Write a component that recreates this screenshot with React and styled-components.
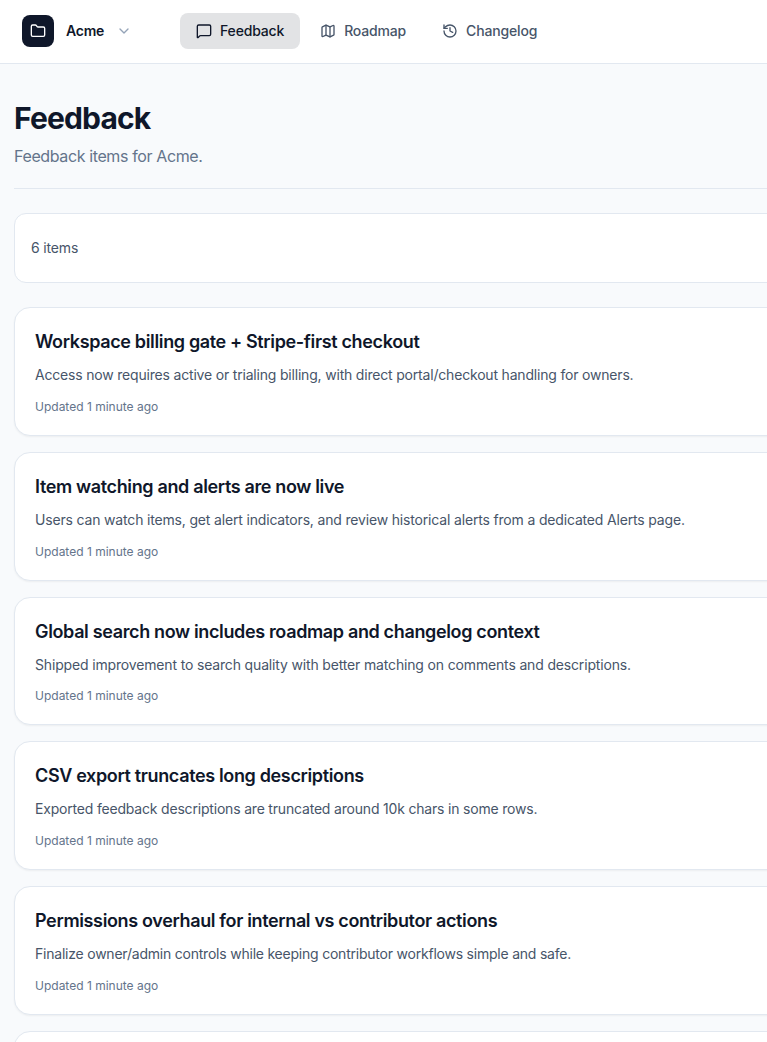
import styled, { createGlobalStyle } from 'styled-components';
import { ChevronDown, Folder, History, Map, MessageSquare } from 'lucide-react';

const GlobalStyle = createGlobalStyle`
  * {
    box-sizing: border-box;
  }

  body {
    margin: 0;
    background: #f8fafc;
    color: #0f172a;
    font-family: Inter, sans-serif;
    -webkit-font-smoothing: antialiased;
    overflow: hidden;
  }

  h1, h2, p {
    margin: 0;
  }
`;

const Page = styled.div`
  height: 100vh;
  overflow: hidden;
`;

const Header = styled.header`
  display: flex;
  align-items: center;
  height: 64px;
  padding: 0 22px 2px;
  background: #fff;
  border-bottom: 1px solid #e2e8f0;
`;

const WorkspaceButton = styled.button`
  display: flex;
  align-items: center;
  gap: 12px;
  width: 158px;
  padding: 0;
  border: 0;
  background: none;
  color: #0f172a;
  font: 600 14px/20px Inter, sans-serif;
  letter-spacing: -0.25px;

  .chevron {
    color: #94a3b8;
  }
`;

const Logo = styled.span`
  display: flex;
  align-items: center;
  justify-content: center;
  width: 32px;
  height: 32px;
  border-radius: 8px;
  background: #0f172a;
  color: #fff;
`;

const Nav = styled.nav`
  display: flex;
  gap: 4px;
`;

const NavItem = styled.a`
  display: flex;
  align-items: center;
  gap: 8px;
  height: 36px;
  padding: 0 16px;
  border-radius: 8px;
  background: ${props => (props.$active ? '#e2e3e5' : 'transparent')};
  color: ${props => (props.$active ? '#0f172a' : '#475569')};
  font-size: 14px;
  font-weight: 500;
  line-height: 20px;
  letter-spacing: -0.17px;
`;

const Main = styled.main`
  width: 1200px;
  padding: 36px 14px 0;
`;

const PageHeader = styled.div`
  padding-bottom: 20px;
  margin-bottom: 24px;
  border-bottom: 1px solid #e2e8f0;

  h1 {
    font-size: 30px;
    font-weight: 700;
    line-height: 36px;
    letter-spacing: -0.028em;
  }

  p {
    margin-top: 8px;
    color: #64748b;
    font-size: 16px;
    line-height: 24px;
    letter-spacing: -0.38px;
  }
`;

const Summary = styled.div`
  display: flex;
  align-items: center;
  height: 70px;
  padding: 0 16px;
  margin-bottom: 24px;
  border: 1px solid #e2e8f0;
  border-radius: 12px;
  background: #fff;
  color: #475569;
  font-size: 14px;
  line-height: 20px;
  letter-spacing: -0.15px;
`;

const ItemList = styled.div`
  display: flex;
  flex-direction: column;
  gap: 16px;
`;

const ItemCard = styled.article`
  padding: 20px;
  border: 1px solid #e2e8f0;
  border-radius: 16px;
  background: #fff;
  box-shadow: 0 1px 2px rgba(0, 0, 0, 0.05);

  h2 {
    font-size: 18px;
    font-weight: 600;
    line-height: 28px;
    letter-spacing: -0.355px;
  }
`;

const Description = styled.p`
  && {
    margin-top: 8px;
  }
  color: #475569;
  font-size: 14px;
  line-height: 22.75px;
  letter-spacing: ${props => props.$tracking}px;
`;

const Timestamp = styled.p`
  && {
    margin-top: 12px;
  }
  color: #64748b;
  font-size: 12px;
  line-height: 16px;
`;

const navItems = [
  { label: 'Feedback', icon: MessageSquare, active: true },
  { label: 'Roadmap', icon: Map },
  { label: 'Changelog', icon: History },
];

const items = [
  {
    id: 1,
    title: 'Workspace billing gate + Stripe-first checkout',
    description: 'Access now requires active or trialing billing, with direct portal/checkout handling for owners.',
    tracking: -0.19,
  },
  {
    id: 2,
    title: 'Item watching and alerts are now live',
    description: 'Users can watch items, get alert indicators, and review historical alerts from a dedicated Alerts page.',
    tracking: -0.17,
  },
  {
    id: 3,
    title: 'Global search now includes roadmap and changelog context',
    description: 'Shipped improvement to search quality with better matching on comments and descriptions.',
    tracking: -0.16,
  },
  {
    id: 4,
    title: 'CSV export truncates long descriptions',
    description: 'Exported feedback descriptions are truncated around 10k chars in some rows.',
    tracking: -0.19,
  },
  {
    id: 5,
    title: 'Permissions overhaul for internal vs contributor actions',
    description: 'Finalize owner/admin controls while keeping contributor workflows simple and safe.',
    tracking: -0.22,
  },
];

const App = () => {
  return (
    <Page>
      <GlobalStyle />
      <Header>
        <WorkspaceButton>
          <Logo>
            <Folder size={16} />
          </Logo>
          Acme
          <ChevronDown className="chevron" size={16} />
        </WorkspaceButton>
        <Nav>
          {navItems.map(({ label, icon: Icon, active }) => (
            <NavItem key={label} $active={active}>
              <Icon size={16} />
              {label}
            </NavItem>
          ))}
        </Nav>
      </Header>
      <Main>
        <PageHeader>
          <h1>Feedback</h1>
          <p>Feedback items for Acme.</p>
        </PageHeader>
        <Summary>6 items</Summary>
        <ItemList>
          {items.map(item => (
            <ItemCard key={item.id}>
              <h2>{item.title}</h2>
              <Description $tracking={item.tracking}>{item.description}</Description>
              <Timestamp>Updated 1 minute ago</Timestamp>
            </ItemCard>
          ))}
          <ItemCard />
        </ItemList>
      </Main>
    </Page>
  );
};

export default App;
